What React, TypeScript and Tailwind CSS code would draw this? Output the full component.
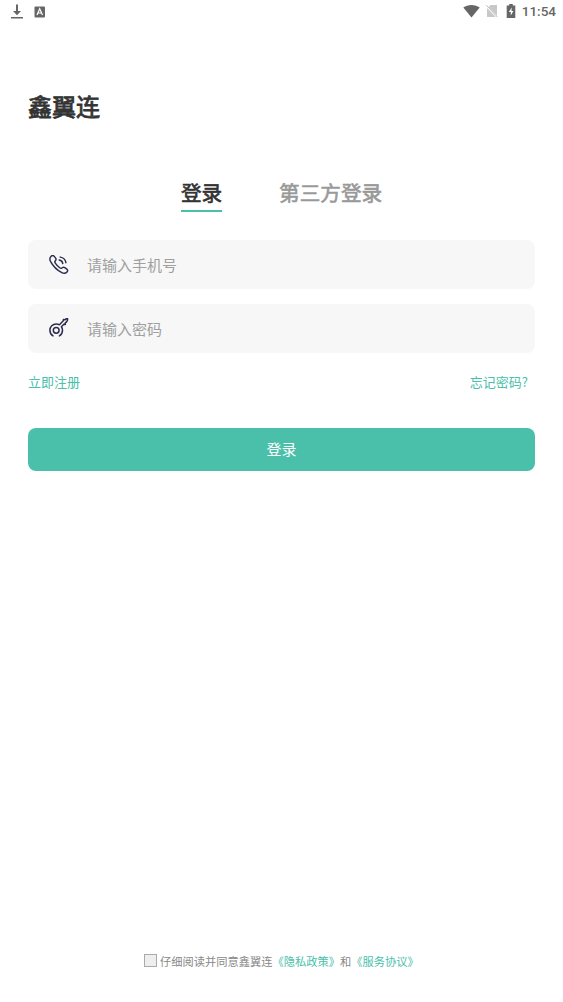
import { useState } from 'react';

const tabs = [
  { id: 'account', label: '登录' },
  { id: 'third', label: '第三方登录' }
];

function PhoneIcon() {
  return (
    <svg className="w-5 h-5" viewBox="0 0 20 20" fill="none" stroke="#2b2d50" strokeWidth="1.45" strokeLinecap="round" strokeLinejoin="round">
      <path d="M2.2 1.2C3.4.1 4.4.3 5.3 1.4l1.3 1.7c.7 1 .6 1.800-.2 2.600-.8.8-.9 1.300-.3 2.200 1.300 2 2.900 3.700 4.900 5.100.9.6 1.500.5 2.300-.2.8-.7 1.600-.8 2.500-.2l2 1.500c1.100.9 1.200 1.800.2 2.900-1.300 1.400-3.200 1.600-5.200.6C7.800 15.100 4 11.100 1.500 6.400.5 4.400.7 2.600 2.200 1.200Z" />
      <path d="M10.200 5c2.100.3 3.300 1.500 3.600 3.600" />
      <path d="M11.200 2.100c3.300.5 5.200 2.400 5.700 5.600" />
    </svg>
  );
}

function KeyIcon() {
  return (
    <svg className="mb-px w-5 h-5" viewBox="0 0 20 20" fill="none" stroke="#2b2d50" strokeWidth="1.5" strokeLinecap="round" strokeLinejoin="round">
      <path d="M4 17.900C2 16.800.9 14.800.9 12.300.9 8.800 3.700 6 7.200 6c1.200 0 2.300.3 3.200.8l3.900-4 .1-1.300 1.700.2C16.800.7 17.600.5 18.600.8c.1 1.300-.2 2.200-1.100 3.100l-1.300 1.200.1 1.300-1.500-.1-2.400 2.500c.7 1 1.100 2.200 1.100 3.500 0 2.500-1.100 4.500-3.100 5.600" />
      <circle cx="7.200" cy="12.300" r="2.900" />
    </svg>
  );
}

function StatusBar() {
  return (
    <div className="flex h-6 items-center justify-between pl-2.5 pr-[7px] pb-0.5 text-[#666666]">
      <div className="flex items-center gap-2.5">
        <svg className="mt-px w-3.5 h-4" viewBox="0 0 14 16" fill="currentColor">
          <path d="M6 .5h2v6.500h3L7 11.200 3 7h3ZM1 13h12v1.500H1Z" />
        </svg>
        <svg className="mt-px w-3 h-3" viewBox="0 0 12 12">
          <rect x=".5" y=".5" width="10.500" height="11" rx="1" fill="currentColor" />
          <path d="M3 9 5.700 2.800 8.500 9M4 7h3.500" fill="none" stroke="white" strokeWidth="1.200" />
        </svg>
      </div>
      <div className="flex items-center">
        <svg className="w-[17px] h-3.5" viewBox="0 0 17 14" fill="currentColor">
          <path d="M.3 3.500C4.800.1 12.200.1 16.700 3.500L8.500 13.500Z" />
        </svg>
        <svg className="ml-1.5 w-3 h-3.5" viewBox="0 0 12 14">
          <path d="M4.500 1H11v12H1V4.500Z" fill="#c8c8c8" />
          <path d="m.5 2 11 11.500" stroke="white" strokeWidth="1.800" />
          <path d="m.3 1.200 11.300 12" stroke="#bdbdbd" strokeWidth="1" />
        </svg>
        <svg className="ml-2 w-2.5 h-3.5" viewBox="0 0 10 14">
          <path d="M3.200 0h3.600v1.500h2.500V14H.7V1.500h2.500Z" fill="currentColor" />
          <path d="M5.700 3.500 2.800 8h2v3.500L7.400 7H5.500Z" fill="white" />
        </svg>
        <span className="ml-1.5 text-[13.5px] leading-4 font-medium font-[Roboto,sans-serif]">11:54</span>
      </div>
    </div>
  );
}

export default function App() {
  const [activeTab, setActiveTab] = useState('account');

  return (
    <div className="flex min-h-screen flex-col bg-white font-['Noto_Sans_CJK_SC',sans-serif]">
      <StatusBar />

      <main className="flex flex-1 flex-col px-7 pt-16">
        <h1 className="text-2xl leading-9 font-normal text-[#333333] [-webkit-text-stroke:0.8px]">鑫翼连</h1>

        {/* Login method */}
        <div className="mt-[54px] flex justify-center gap-[57px]">
          {tabs.map((tab) => (
            <button
              key={tab.id}
              onClick={() => setActiveTab(tab.id)}
              className={`h-[34px] border-b-2 pb-1 text-[20.6px] leading-[28px] [-webkit-text-stroke:0.6px] ${
                activeTab === tab.id
                  ? 'border-[#4ac0aa] text-[#333333]'
                  : 'border-transparent text-[#999999]'
              }`}
            >
              {tab.label}
            </button>
          ))}
        </div>

        <form className="mt-7 flex flex-col" onSubmit={(e) => e.preventDefault()}>
          <label className="flex h-[49px] items-center rounded-lg bg-[#f7f7f7] px-[21px]">
            <PhoneIcon />
            <input
              type="tel"
              placeholder="请输入手机号"
              className="ml-[18px] min-w-0 flex-1 pt-px text-[15px] outline-none placeholder:text-[#a0a0a0]"
            />
          </label>
          <label className="mt-[15px] flex h-[49px] items-center rounded-lg bg-[#f7f7f7] px-[21px]">
            <KeyIcon />
            <input
              type="password"
              placeholder="请输入密码"
              className="ml-[18px] min-w-0 flex-1 pt-px text-[15px] outline-none placeholder:text-[#a0a0a0]"
            />
          </label>

          <div className="mt-[19px] flex justify-between pr-[7px] text-[13px] leading-5 text-[#4ac0aa]">
            <button type="button">立即注册</button>
            <button type="button">忘记密码?</button>
          </div>

          <button type="submit" className="mt-9 h-[43px] rounded-lg bg-[#4ac0aa] text-[15px] text-white">
            登录
          </button>
        </form>
      </main>

      {/* Agreement */}
      <footer className="flex h-[82px] items-center pl-36 text-[11.25px] leading-4 text-[#888888]">
        <input type="checkbox" className="mr-[3px] mb-px h-[13px] w-[13px] appearance-none border border-[#aaaaaa] bg-[#eeeeee]" />
        <span>仔细阅读并同意鑫翼连</span>
        <a className="text-[#4ac0aa]">《隐私政策》</a>
        <span>和</span>
        <a className="text-[#4ac0aa]">《服务协议》</a>
      </footer>
    </div>
  );
}
